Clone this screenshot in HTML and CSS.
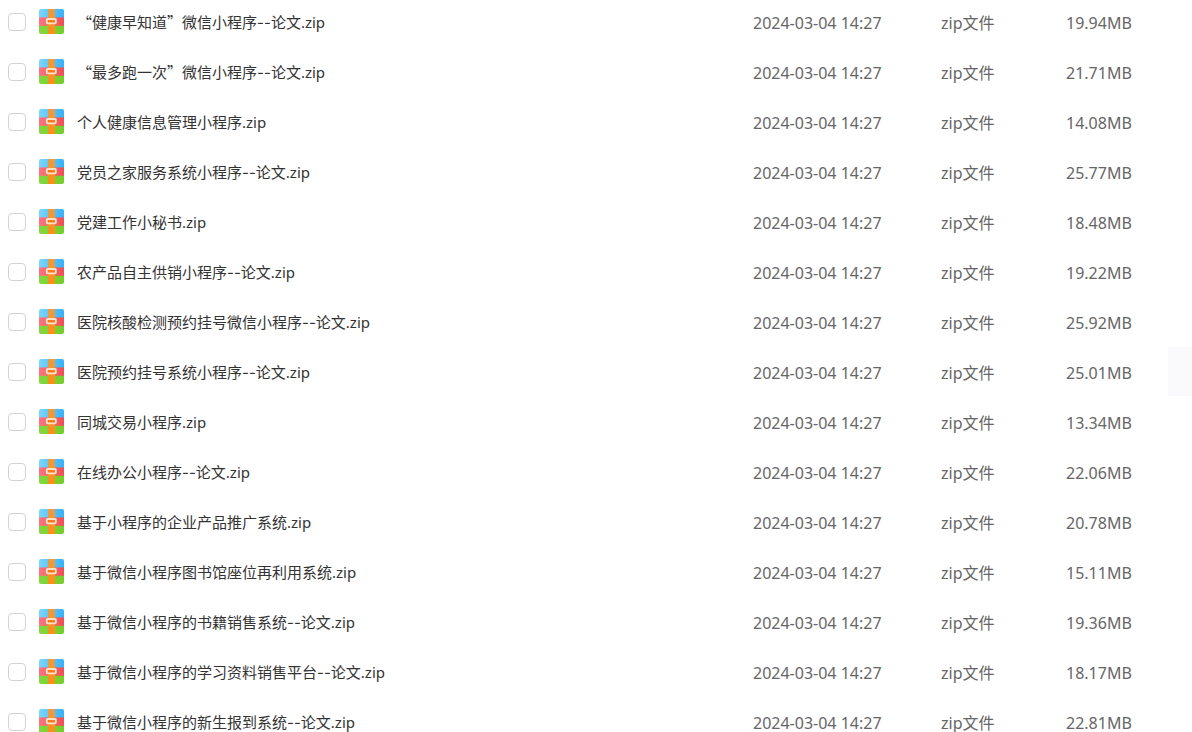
FILE: index.html
```html
<!DOCTYPE html>
<html lang="zh-CN">
<head>
  <meta charset="UTF-8">
  <title>文件列表</title>
  <link rel="stylesheet" href="styles.css">
</head>
<body>
  <svg class="sprite" aria-hidden="true">
    <defs>
      <linearGradient id="blue" x1="0" y1="0" x2="1" y2="0">
        <stop offset="0" stop-color="#7bd6fd"/>
        <stop offset="1" stop-color="#36b1fb"/>
      </linearGradient>
      <linearGradient id="red" x1="0" y1="0" x2="1" y2="0">
        <stop offset="0" stop-color="#fb7480"/>
        <stop offset="1" stop-color="#ee4f55"/>
      </linearGradient>
      <linearGradient id="green" x1="0" y1="0" x2="1" y2="0">
        <stop offset="0" stop-color="#84d63f"/>
        <stop offset="1" stop-color="#74cc28"/>
      </linearGradient>
      <linearGradient id="orange" x1="0" y1="0" x2="0" y2="1">
        <stop offset="0" stop-color="#eb9c45"/>
        <stop offset="1" stop-color="#fb8f12"/>
      </linearGradient>
    </defs>
    <symbol id="zip" viewBox="0 0 25 25">
      <path fill="url(#blue)" d="M2 0h21a2 2 0 0 1 2 2v7H0V2a2 2 0 0 1 2-2z"/>
      <path fill="url(#green)" d="M0 16h25v7a2 2 0 0 1-2 2H2a2 2 0 0 1-2-2z"/>
      <path fill="url(#red)" d="M0 8.400h25v8.400H0z"/>
      <path fill="url(#orange)" d="M9 0h7v25H9z"/>
      <rect x="7.800" y="10" width="9" height="4.400" rx="0.800" fill="#f47a1c" stroke="#ffe3c8" stroke-width="1.900"/>
    </symbol>
  </svg>

  <main class="file-panel">
    <table class="file-list" id="fileList" aria-label="文件列表">
      <colgroup>
        <col class="col-check">
        <col class="col-name">
        <col class="col-date">
        <col class="col-type">
        <col class="col-size">
      </colgroup>
      <tbody></tbody>
    </table>
    <div class="side-handle"></div>
  </main>

  <script>
    const files = [
      ['“健康早知道”微信小程序--论文.zip', '19.94MB'],
      ['“最多跑一次”微信小程序--论文.zip', '21.71MB'],
      ['个人健康信息管理小程序.zip', '14.08MB'],
      ['党员之家服务系统小程序--论文.zip', '25.77MB'],
      ['党建工作小秘书.zip', '18.48MB'],
      ['农产品自主供销小程序--论文.zip', '19.22MB'],
      ['医院核酸检测预约挂号微信小程序--论文.zip', '25.92MB'],
      ['医院预约挂号系统小程序--论文.zip', '25.01MB'],
      ['同城交易小程序.zip', '13.34MB'],
      ['在线办公小程序--论文.zip', '22.06MB'],
      ['基于小程序的企业产品推广系统.zip', '20.78MB'],
      ['基于微信小程序图书馆座位再利用系统.zip', '15.11MB'],
      ['基于微信小程序的书籍销售系统--论文.zip', '19.36MB'],
      ['基于微信小程序的学习资料销售平台--论文.zip', '18.17MB'],
      ['基于微信小程序的新生报到系统--论文.zip', '22.81MB']
    ];

    const tbody = document.querySelector('#fileList tbody');

    files.forEach(([name, size], i) => {
      const label = name
        .replace(/[“”]/g, '<span class="quote">$&</span>')
        .replace('--', '<span class="dash">--</span>');
      const row = document.createElement('tr');
      row.innerHTML = `
        <td><input type="checkbox" class="check" id="file${i}"></td>
        <td>
          <label class="file-name" for="file${i}">
            <svg class="file-icon" aria-hidden="true"><use href="#zip"/></svg>
            <span>${label}</span>
          </label>
        </td>
        <td class="meta">2024-03-04 14:27</td>
        <td class="meta">zip文件</td>
        <td class="meta">${size}</td>`;
      tbody.appendChild(row);
    });
  </script>
</body>
</html>
```
FILE: styles.css
```css
body {
  margin: 0;
  background-color: #fff;
  color: #333;
  font-family: "Noto Sans", "Noto Sans CJK SC", sans-serif;
  font-size: 15px;
  line-height: 20px;
}

.sprite {
  position: absolute;
  width: 0;
  height: 0;
}

.file-panel {
  height: 100vh;
  overflow: hidden;
}

/* the list is scrolled a little past its first row */
.file-list {
  width: 100%;
  margin-top: -3px;
  table-layout: fixed;
  border-collapse: collapse;
}

.col-check {
  width: 39px;
}

.col-date {
  width: 188px;
}

.col-type {
  width: 125px;
}

.col-size {
  width: 126px;
}

.file-list td {
  box-sizing: border-box;
  height: 50px;
  padding: 0;
  vertical-align: middle;
  white-space: nowrap;
}

.check {
  display: block;
  width: 18px;
  height: 18px;
  margin: 0 0 0 8px;
  appearance: none;
  background-color: #fff;
  border: 1px solid #d0d3d8;
  border-radius: 4px;
  cursor: pointer;
}

.check:checked {
  background-color: #06a7ff;
  border-color: #06a7ff;
}

.file-name {
  display: flex;
  align-items: center;
  gap: 13px;
}

.file-icon {
  width: 25px;
  height: 25px;
  margin-bottom: 2px;
}

.quote {
  font-family: "Noto Sans CJK SC", sans-serif;
}

.dash {
  font-family: Inter, sans-serif;
}

.file-list .meta {
  padding-top: 2px;
  color: #666;
  font-size: 16px;
}

.side-handle {
  position: fixed;
  top: 347px;
  right: 0;
  width: 24px;
  height: 49px;
  background-color: #fafafc;
}
```
